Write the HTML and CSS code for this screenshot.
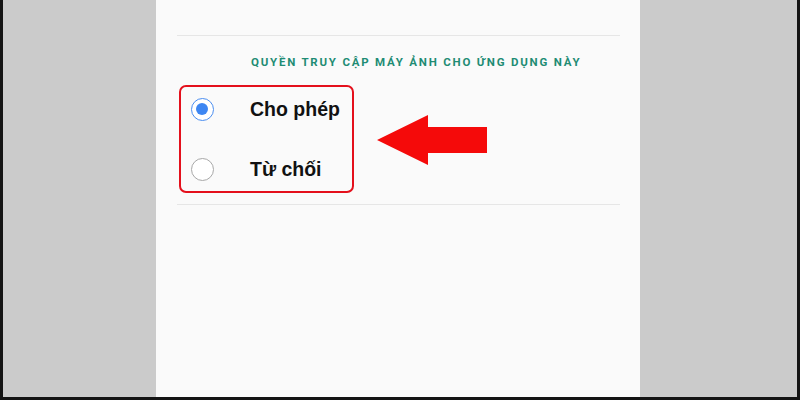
FILE: index.html
```html
<!DOCTYPE html>
<html lang="vi">
<head>
<meta charset="utf-8">
<title>Quyền truy cập máy ảnh</title>
<link rel="stylesheet" href="styles.css">
</head>
<body>
<div class="frame">
  <div class="stage">
    <div class="panel">
      <div class="divider"></div>
      <div class="section-title">QUYỀN TRUY CẬP MÁY ẢNH CHO ỨNG DỤNG NÀY</div>
      <div class="options">
        <div class="option">
          <span class="radio checked"></span>
          <span class="label">Cho phép</span>
        </div>
        <div class="option">
          <span class="radio"></span>
          <span class="label">Từ chối</span>
        </div>
      </div>
      <div class="divider bottom"></div>
      <svg class="arrow" width="112" height="52" viewBox="0 0 112 52">
        <polygon points="0,26 51,1 51,13 110,13 110,39 51,39 51,51" fill="#f50a0a"/>
      </svg>
    </div>
  </div>
</div>
</body>
</html>
```
FILE: styles.css
```css
html, body {
  margin: 0;
  padding: 0;
}
body {
  background: #141414;
  width: 800px;
  height: 400px;
  overflow: hidden;
}
.frame {
  padding: 0 3px 3px 3px;
  height: 397px;
}
.stage {
  background: #cbcbcb;
  height: 100%;
  display: flex;
}
.panel {
  position: relative;
  margin-left: 153px;
  width: 484px;
  height: 100%;
  background: #fafafa;
  box-sizing: border-box;
  padding: 35px 20px 0 21px;
  font-family: "Liberation Sans", Arial, sans-serif;
}
.divider {
  height: 1px;
  background: #e6e6e6;
}
.divider.bottom {
  margin-top: 11px;
}
.section-title {
  margin: 19px 0 0 74px;
  font-family: Roboto, "Liberation Sans", sans-serif;
  font-weight: 700;
  font-size: 11.5px;
  letter-spacing: 1.78px;
  color: #1f8c74;
  line-height: 14px;
  white-space: nowrap;
}
.options {
  margin: 16px 0 0 2px;
  width: 171px;
  height: 97px;
  border: 2px solid #e4101c;
  border-radius: 7px;
  display: flex;
  flex-direction: column;
  padding-top: 7px;
  box-sizing: content-box;
}
.option {
  display: flex;
  align-items: center;
  height: 30px;
}
.option + .option {
  margin-top: 30px;
}
.radio {
  width: 23px;
  height: 23px;
  border: 1.5px solid #a8a8a8;
  border-radius: 50%;
  box-sizing: border-box;
  margin-left: 10px;
  position: relative;
  background: #fff;
}
.radio.checked {
  border-color: #4b8ef0;
}
.radio.checked::after {
  content: "";
  position: absolute;
  left: 4px;
  top: 4px;
  width: 12px;
  height: 12px;
  border-radius: 50%;
  background: #3d86f2;
}
.label {
  margin-left: 36px;
  font-size: 19.5px;
  font-weight: 700;
  color: #111;
}
.arrow {
  position: absolute;
  left: 221px;
  top: 114px;
}
```
